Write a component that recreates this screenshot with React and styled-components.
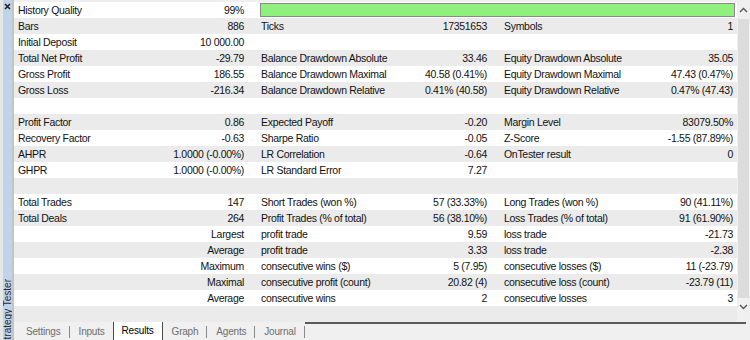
import React from 'react';
import styled, { createGlobalStyle } from 'styled-components';

const rows = [
    [['History Quality', '99%'], 'bar'],
    [['Bars', '886'], ['Ticks', '17351653'], ['Symbols', '1']],
    [['Initial Deposit', '10 000.00'], ['', ''], ['', '']],
    [['Total Net Profit', '-29.79'], ['Balance Drawdown Absolute', '33.46'], ['Equity Drawdown Absolute', '35.05']],
    [['Gross Profit', '186.55'], ['Balance Drawdown Maximal', '40.58 (0.41%)'], ['Equity Drawdown Maximal', '47.43 (0.47%)']],
    [['Gross Loss', '-216.34'], ['Balance Drawdown Relative', '0.41% (40.58)'], ['Equity Drawdown Relative', '0.47% (47.43)']],
    [['', ''], ['', ''], ['', '']],
    [['Profit Factor', '0.86'], ['Expected Payoff', '-0.20'], ['Margin Level', '83079.50%']],
    [['Recovery Factor', '-0.63'], ['Sharpe Ratio', '-0.05'], ['Z-Score', '-1.55 (87.89%)']],
    [['AHPR', '1.0000 (-0.00%)'], ['LR Correlation', '-0.64'], ['OnTester result', '0']],
    [['GHPR', '1.0000 (-0.00%)'], ['LR Standard Error', '7.27'], ['', '']],
    [['', ''], ['', ''], ['', '']],
    [['Total Trades', '147'], ['Short Trades (won %)', '57 (33.33%)'], ['Long Trades (won %)', '90 (41.11%)']],
    [['Total Deals', '264'], ['Profit Trades (% of total)', '56 (38.10%)'], ['Loss Trades (% of total)', '91 (61.90%)']],
    [['', 'Largest'], ['profit trade', '9.59'], ['loss trade', '-21.73']],
    [['', 'Average'], ['profit trade', '3.33'], ['loss trade', '-2.38']],
    [['', 'Maximum'], ['consecutive wins ($)', '5 (7.95)'], ['consecutive losses ($)', '11 (-23.79)']],
    [['', 'Maximal'], ['consecutive profit (count)', '20.82 (4)'], ['consecutive loss (count)', '-23.79 (11)']],
    [['', 'Average'], ['consecutive wins', '2'], ['consecutive losses', '3']],
    [['', ''], ['', ''], ['', '']],
];

const tabs = ['Settings', 'Inputs', 'Results', 'Graph', 'Agents', 'Journal'];
const active = 'Results';

function App() {
    return (
        <Window>
            <GlobalStyle />
            <SideBar>
                <CloseIcon width="7" height="7" viewBox="0 0 7 7">
                    <path d="M1 1L6 6M6 1L1 6" stroke="#222" strokeWidth="1.6" />
                </CloseIcon>
                <SideTitle>Strategy Tester</SideTitle>
            </SideBar>
            <Main>
                <Body>
                    <Table>
                        {rows.map((row, i) => (
                            <Row key={i} $odd={i % 2 === 1}>
                                {row.map((cell, j) => cell === 'bar' ? (
                                    <BarCell key={j}><QualityBar /></BarCell>
                                ) : (
                                    <Cell key={j} $last={j === 2}>
                                        <span>{cell[0]}</span>
                                        <span>{cell[1]}</span>
                                    </Cell>
                                ))}
                            </Row>
                        ))}
                    </Table>
                    <ScrollBar>
                        <svg width="9" height="6" viewBox="0 0 9 6">
                            <polyline points="1,5 4.5,1.5 8,5" fill="none" stroke="#555" strokeWidth="1.4" />
                        </svg>
                        <Thumb />
                        <svg width="9" height="6" viewBox="0 0 9 6">
                            <polyline points="1,1 4.5,4.5 8,1" fill="none" stroke="#555" strokeWidth="1.4" />
                        </svg>
                    </ScrollBar>
                </Body>
                <TabBar>
                    {tabs.map((t, i) => (
                        <Tab key={t} $active={t === active} $beforeActive={tabs[i + 1] === active}>{t}</Tab>
                    ))}
                    <TabRest />
                </TabBar>
            </Main>
        </Window>
    );
}

export default App;

const GlobalStyle = createGlobalStyle`
    body{
        margin:0;
        background:#f0f0f0;
        font-family:"Liberation Sans", Arial, sans-serif;
        font-size:10.5px;
        letter-spacing:-0.3px;
        color:#111;
    }
`

const Window = styled.div`
    width:750px;
    height:340px;
    display:flex;
    overflow:hidden;
    background:#f0f0f0;
`

const SideBar = styled.div`
    width:9px;
    flex-shrink:0;
    border-left:3px solid #e6e6e6;
    border-right:2px solid #c4c4c4;
    background:#bfd3ea;
    display:flex;
    flex-direction:column;
    overflow:hidden;
    position:relative;
`

const CloseIcon = styled.svg`
    position:absolute;
    top:3px;
    left:1px;
`

const SideTitle = styled.div`
    margin-top:auto;
    margin-bottom:-6px;
    writing-mode:vertical-rl;
    transform:rotate(180deg);
    font-size:10px;
    letter-spacing:0;
    line-height:9px;
    color:#2a2a2a;
    white-space:nowrap;
`

const Main = styled.div`
    flex:1;
    display:flex;
    flex-direction:column;
    min-width:0;
`

const Body = styled.div`
    flex:1;
    display:flex;
    padding-top:2px;
    min-height:0;
`

const Table = styled.div`
    flex:1;
    display:flex;
    flex-direction:column;
`

const Row = styled.div`
    height:16px;
    display:grid;
    grid-template-columns:243px 243px 1fr;
    background:${p => p.$odd ? '#ebebeb' : '#ffffff'};
`

const Cell = styled.div`
    display:flex;
    align-items:center;
    justify-content:space-between;
    padding-left:4px;
    padding-right:${p => p.$last ? '4px' : '13px'};
    white-space:nowrap;
`

const BarCell = styled.div`
    grid-column:2 / 4;
    display:flex;
    padding:1px 2px 1px 3px;
`

const QualityBar = styled.div`
    flex:1;
    background:#90f07e;
    border:1px solid #8a8a8a;
`

const ScrollBar = styled.div`
    width:13px;
    display:flex;
    flex-direction:column;
    align-items:center;
    background:#f0f0f0;
    padding:5px 0 12px;
    gap:6px;
`

const Thumb = styled.div`
    flex:1;
    width:11px;
    background:#dcdcdc;
`

const TabBar = styled.div`
    height:18px;
    display:flex;
    align-items:stretch;
    padding-left:3px;
`

const Tab = styled.div`
    display:flex;
    align-items:center;
    padding:0 8px;
    font-size:10px;
    letter-spacing:-0.2px;
    line-height:12px;
    color:${p => p.$active ? '#000' : '#6e6e6e'};
    background:${p => p.$active ? '#fff' : 'transparent'};
    border-left:1px solid ${p => p.$active ? '#4a4a4a' : 'transparent'};
    border-right:1px solid ${p => p.$active ? '#4a4a4a' : p.$beforeActive ? 'transparent' : '#8a8a8a'};
    margin:${p => p.$active ? '0 0 0 -1px' : '4px 0 2px'};
`

const TabRest = styled.div`
    flex:1;
    border-top:2px solid #5a5a5a;
    margin-right:4px;
`
